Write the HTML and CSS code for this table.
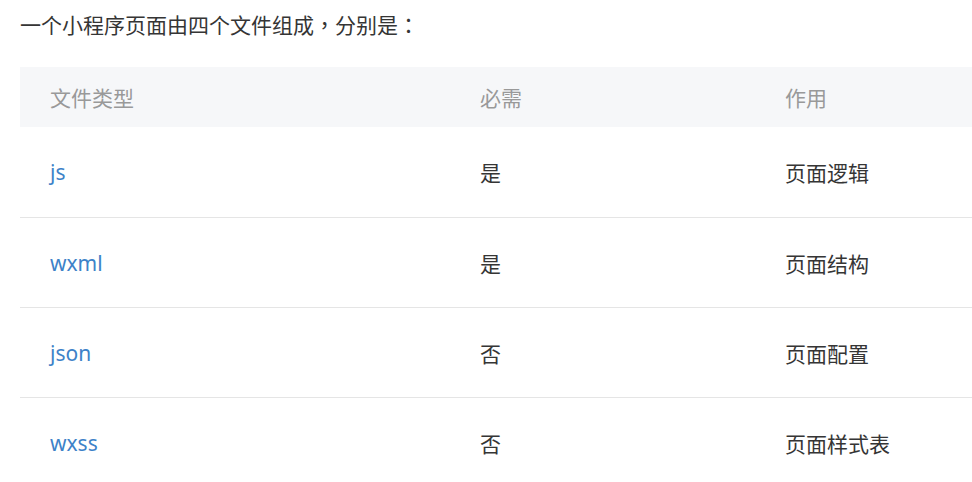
FILE: index.html
```html
<!DOCTYPE html>
<html lang="zh">
<head>
<meta charset="utf-8">
<link rel="stylesheet" href="styles.css">
</head>
<body>
<div class="page">
  <p class="intro">一个小程序页面由四个文件组成<span class="punct" lang="zh-Hant-TW">，</span>分别是<span class="punct" lang="zh-Hant-TW">：</span></p>
  <table class="files">
    <colgroup>
      <col class="c1"><col class="c2"><col class="c3">
    </colgroup>
    <thead>
      <tr><th>文件类型</th><th>必需</th><th>作用</th></tr>
    </thead>
    <tbody>
      <tr><td class="ext">js</td><td>是</td><td>页面逻辑</td></tr>
      <tr><td class="ext">wxml</td><td>是</td><td>页面结构</td></tr>
      <tr><td class="ext">json</td><td>否</td><td>页面配置</td></tr>
      <tr><td class="ext">wxss</td><td>否</td><td>页面样式表</td></tr>
    </tbody>
  </table>
</div>
</body>
</html>
```
FILE: styles.css
```css
html, body {
  margin: 0;
  padding: 0;
  background: #fff;
}
body {
  font-family: "Noto Sans", "Noto Sans CJK SC", sans-serif;
  font-size: 21px;
  color: #353535;
  overflow: hidden;
}
.page {
  padding: 10px 0 0 20px;
}
.intro {
  margin: 0;
  height: 30px;
  line-height: 30px;
}
.punct {
  font-family: "Noto Sans CJK TC", sans-serif;
  line-height: 1;
}
.files {
  margin-top: 27px;
  width: 1000px;
  border-collapse: collapse;
  table-layout: fixed;
}
.c1 { width: 430px; }
.c2 { width: 305px; }
.files th {
  background: #f6f7f9;
  color: #999;
  font-weight: normal;
  text-align: left;
  height: 60px;
  padding: 0 0 0 30px;
  vertical-align: middle;
}
.files td {
  height: 89px;
  padding: 0 0 0 30px;
  vertical-align: middle;
  border-bottom: 1px solid #e5e5e5;
}
.files tbody tr:first-child td {
  height: 90px;
}
.files tbody tr:last-child td {
  border-bottom: none;
}
.files td.ext {
  color: #3d82c8;
}
```
